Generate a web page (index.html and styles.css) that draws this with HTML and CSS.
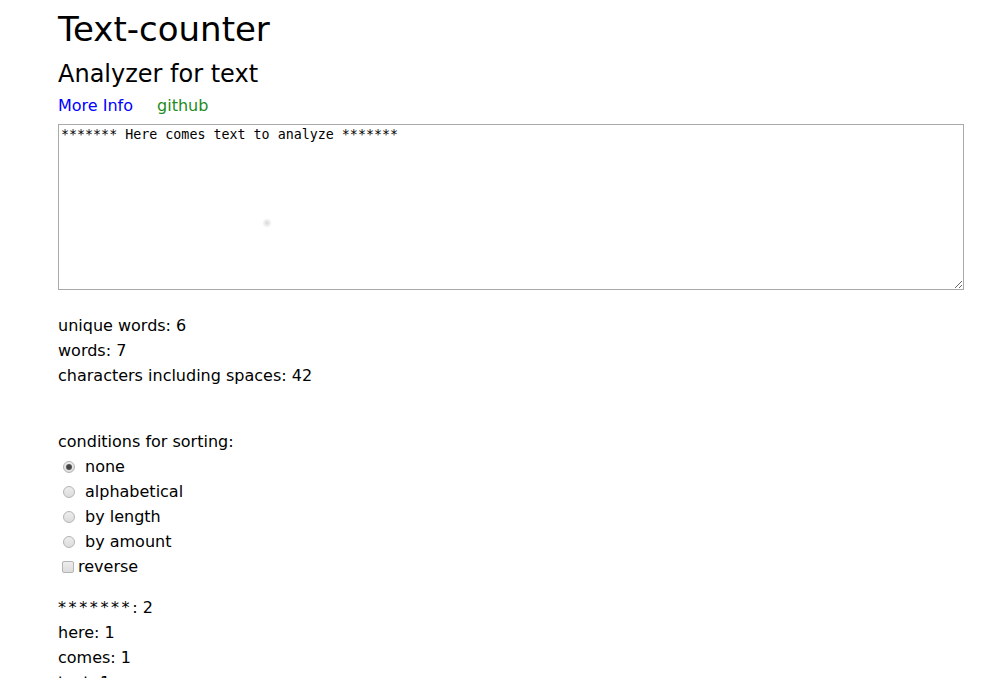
FILE: index.html
```html
<!DOCTYPE html>
<html>
<head>
<meta charset="utf-8">
<link rel="stylesheet" href="styles.css">
</head>
<body>
<div class="page">
  <h1 class="title">Text-counter</h1>
  <h2 class="subtitle">Analyzer for text</h2>
  <nav class="links">
    <a class="link-info" href="#">More Info</a>
    <a class="link-github" href="#">github</a>
  </nav>
  <div class="input-wrap">
    <textarea class="input">******* Here comes text to analyze *******</textarea>
    <span class="smudge"></span>
  </div>
  <div class="stats">
    <div class="line">unique words: 6</div>
    <div class="line">words: 7</div>
    <div class="line">characters including spaces: 42</div>
  </div>
  <div class="sorting">
    <div class="line">conditions for sorting:</div>
    <label class="opt"><input class="radio" type="radio" name="sort" checked> none</label>
    <label class="opt"><input class="radio" type="radio" name="sort"> alphabetical</label>
    <label class="opt"><input class="radio" type="radio" name="sort"> by length</label>
    <label class="opt"><input class="radio" type="radio" name="sort"> by amount</label>
    <label class="opt"><input class="check" type="checkbox">reverse</label>
  </div>
  <div class="results">
    <div class="line"><span class="stars">*******</span>: 2</div>
    <div class="line">here: 1</div>
    <div class="line">comes: 1</div>
    <div class="line">text: 1</div>
    <div class="line">to: 1</div>
    <div class="line">analyze: 1</div>
  </div>
</div>
</body>
</html>
```

FILE: styles.css
```css
html, body {
  margin: 0;
  padding: 0;
  background: #fff;
}
body {
  font-family: "DejaVu Sans", Verdana, sans-serif;
  font-size: 16px;
  color: #000;
}
.page {
  padding: 0 41px 0 58px;
}
.title {
  font-size: 34px;
  font-weight: normal;
  margin: 9px 0 0;
  line-height: 40px;
}
.subtitle {
  font-size: 24px;
  font-weight: normal;
  margin: 5px 0 0;
  line-height: 40px;
}
.links {
  display: flex;
  gap: 24px;
  height: 29px;
  padding-top: 1px;
  align-items: flex-start;
  line-height: 22px;
}
.links a {
  text-decoration: none;
}
.link-info { color: #0000ff; }
.link-github { color: #228b22; }
.input-wrap {
  position: relative;
}
.input {
  display: block;
  box-sizing: border-box;
  width: 906px;
  height: 166px;
  margin: 0;
  padding: 2px;
  border: 1px solid #a9a9a9;
  font-family: "DejaVu Sans Mono", monospace;
  font-size: 13.33px;
  color: #000;
}
.smudge {
  position: absolute;
  left: 204px;
  top: 94px;
  width: 10px;
  height: 10px;
  border-radius: 50%;
  background: radial-gradient(circle, rgba(170,170,170,0.45), rgba(170,170,170,0) 70%);
}
.line {
  line-height: 25px;
}
.stars {
  letter-spacing: 2.6px;
}
.stats {
  margin-top: 23px;
}
.sorting {
  margin-top: 41px;
  display: flex;
  flex-direction: column;
}
.opt {
  line-height: 25px;
  height: 25px;
  display: flex;
  align-items: center;
}
.radio, .check {
  -webkit-appearance: none;
  appearance: none;
  box-sizing: border-box;
  width: 12px;
  height: 12px;
  border: 1px solid #b4b4b4;
  background: linear-gradient(#ededed, #dcdcdc);
  position: relative;
}
.radio {
  border-radius: 50%;
  margin: 0 10px 0 5px;
}
.radio:checked::after {
  content: "";
  position: absolute;
  left: 2px;
  top: 2px;
  width: 6px;
  height: 6px;
  border-radius: 50%;
  background: radial-gradient(circle, #444 40%, #777 100%);
}
.check {
  border-radius: 2px;
  margin: 0 4px 0 4px;
}
.results {
  margin-top: 16px;
}
```
